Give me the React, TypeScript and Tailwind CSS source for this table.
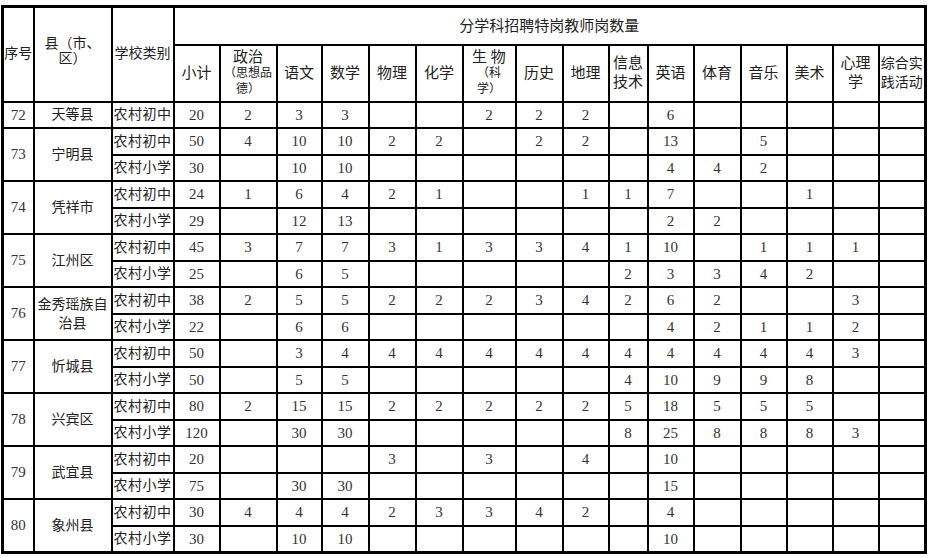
import React from "react";

const widths = [31, 78, 62, 46, 57, 45, 47, 47, 47, 53, 47, 46, 39, 46, 47, 46, 46, 46, 47];

type Group = { no: string; county: React.ReactNode; rows: { type: string; v: (number | null)[] }[] };

const _ = null;
const groups: Group[] = [
  { no: "72", county: "天等县", rows: [{ type: "农村初中", v: [20, 2, 3, 3, _, _, 2, 2, 2, _, 6, _, _, _, _, _] }] },
  {
    no: "73",
    county: "宁明县",
    rows: [
      { type: "农村初中", v: [50, 4, 10, 10, 2, 2, _, 2, 2, _, 13, _, 5, _, _, _] },
      { type: "农村小学", v: [30, _, 10, 10, _, _, _, _, _, _, 4, 4, 2, _, _, _] },
    ],
  },
  {
    no: "74",
    county: "凭祥市",
    rows: [
      { type: "农村初中", v: [24, 1, 6, 4, 2, 1, _, _, 1, 1, 7, _, _, 1, _, _] },
      { type: "农村小学", v: [29, _, 12, 13, _, _, _, _, _, _, 2, 2, _, _, _, _] },
    ],
  },
  {
    no: "75",
    county: "江州区",
    rows: [
      { type: "农村初中", v: [45, 3, 7, 7, 3, 1, 3, 3, 4, 1, 10, _, 1, 1, 1, _] },
      { type: "农村小学", v: [25, _, 6, 5, _, _, _, _, _, 2, 3, 3, 4, 2, _, _] },
    ],
  },
  {
    no: "76",
    county: (
      <>
        金秀瑶族自
        <br />
        治县
      </>
    ),
    rows: [
      { type: "农村初中", v: [38, 2, 5, 5, 2, 2, 2, 3, 4, 2, 6, 2, _, _, 3, _] },
      { type: "农村小学", v: [22, _, 6, 6, _, _, _, _, _, _, 4, 2, 1, 1, 2, _] },
    ],
  },
  {
    no: "77",
    county: "忻城县",
    rows: [
      { type: "农村初中", v: [50, _, 3, 4, 4, 4, 4, 4, 4, 4, 4, 4, 4, 4, 3, _] },
      { type: "农村小学", v: [50, _, 5, 5, _, _, _, _, _, 4, 10, 9, 9, 8, _, _] },
    ],
  },
  {
    no: "78",
    county: "兴宾区",
    rows: [
      { type: "农村初中", v: [80, 2, 15, 15, 2, 2, 2, 2, 2, 5, 18, 5, 5, 5, _, _] },
      { type: "农村小学", v: [120, _, 30, 30, _, _, _, _, _, 8, 25, 8, 8, 8, 3, _] },
    ],
  },
  {
    no: "79",
    county: "武宜县",
    rows: [
      { type: "农村初中", v: [20, _, _, _, 3, _, 3, _, 4, _, 10, _, _, _, _, _] },
      { type: "农村小学", v: [75, _, 30, 30, _, _, _, _, _, _, 15, _, _, _, _, _] },
    ],
  },
  {
    no: "80",
    county: "象州县",
    rows: [
      { type: "农村初中", v: [30, 4, 4, 4, 2, 3, 3, 4, 2, _, 4, _, _, _, _, _] },
      { type: "农村小学", v: [30, _, 10, 10, _, _, _, _, _, _, 10, _, _, _, _, _] },
    ],
  },
];

const cell = "border-2 border-black p-0 text-center align-middle";

export default function App() {
  return (
    <div className="w-[931px] h-[558px] bg-white pt-[5px] pl-[1px] [font-family:'Liberation_Serif','Noto_Sans_CJK_SC',serif] text-[#222]">
      <table className="table-fixed border-collapse border-[3px] border-black w-[923px]">
        <colgroup>
          {widths.map((w, i) => (
            <col key={i} style={{ width: w }} />
          ))}
        </colgroup>
        <thead>
          <tr className="h-[38px]">
            <th rowSpan={2} className={`${cell} font-normal text-[14px] leading-[16px]`}>
              序号
            </th>
            <th rowSpan={2} className={`${cell} font-normal text-[14px] leading-[15px] pb-[6px]`}>
              县（市、
              <br />
              区）
            </th>
            <th rowSpan={2} className={`${cell} font-normal text-[14px] leading-[16px]`}>
              学校类别
            </th>
            <th colSpan={16} className={`${cell} font-normal text-[15px] leading-[16px]`}>
              分学科招聘特岗教师岗数量
            </th>
          </tr>
          <tr className="h-[57px]">
            <th className={`${cell} font-normal text-[15px] leading-[16px]`}>小计</th>
            <th className={`${cell} font-normal text-[15px] leading-[15px]`}>
              政治
              <br />
              <span className="text-[12px]">（思想品</span>
              <br />
              <span className="text-[12px]">德）</span>
            </th>
            <th className={`${cell} font-normal text-[15px] leading-[16px]`}>语文</th>
            <th className={`${cell} font-normal text-[15px] leading-[16px]`}>数学</th>
            <th className={`${cell} font-normal text-[15px] leading-[16px]`}>物理</th>
            <th className={`${cell} font-normal text-[15px] leading-[16px]`}>化学</th>
            <th className={`${cell} font-normal text-[15px] leading-[15px]`}>
              生&nbsp;物
              <br />
              <span className="text-[12px]">（科</span>
              <br />
              <span className="text-[12px]">学）</span>
            </th>
            <th className={`${cell} font-normal text-[15px] leading-[16px]`}>历史</th>
            <th className={`${cell} font-normal text-[15px] leading-[16px]`}>地理</th>
            <th className={`${cell} font-normal text-[15px] leading-[19px]`}>
              信息
              <br />
              技术
            </th>
            <th className={`${cell} font-normal text-[15px] leading-[16px]`}>英语</th>
            <th className={`${cell} font-normal text-[15px] leading-[16px]`}>体育</th>
            <th className={`${cell} font-normal text-[15px] leading-[16px]`}>音乐</th>
            <th className={`${cell} font-normal text-[15px] leading-[16px]`}>美术</th>
            <th className={`${cell} font-normal text-[15px] leading-[19px]`}>
              心理
              <br />
              学
            </th>
            <th className={`${cell} font-normal text-[14px] leading-[19px]`}>
              综合实
              <br />
              践活动
            </th>
          </tr>
        </thead>
        <tbody>
          {groups.map((g) =>
            g.rows.map((r, ri) => (
              <tr key={g.no + ri} className="h-[26.5px]">
                {ri === 0 && (
                  <>
                    <td rowSpan={g.rows.length} className={`${cell} text-[15px] text-[#333]`}>
                      {g.no}
                    </td>
                    <td rowSpan={g.rows.length} className={`${cell} text-[14px] leading-[19px]`}>
                      {g.county}
                    </td>
                  </>
                )}
                <td className={`${cell} text-[14px] tracking-[0.5px]`}>{r.type}</td>
                {r.v.map((x, i) => (
                  <td key={i} className={`${cell} text-[15px] text-[#333] leading-[16px]`}>
                    {x ?? ""}
                  </td>
                ))}
              </tr>
            ))
          )}
        </tbody>
      </table>
    </div>
  );
}
